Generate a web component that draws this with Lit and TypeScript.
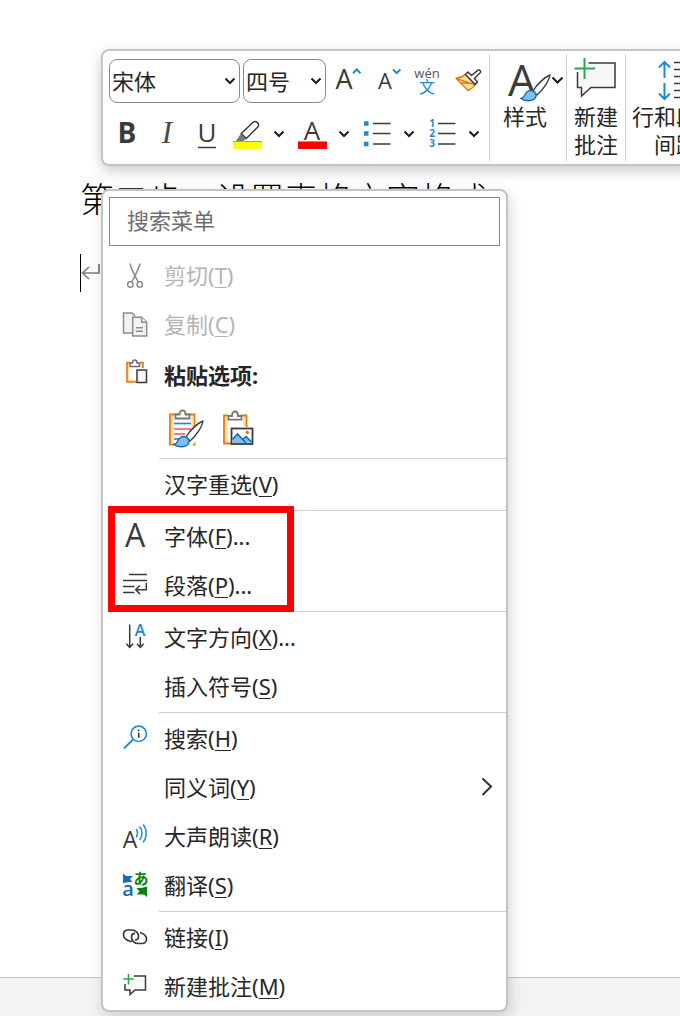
import { LitElement, html, svg, css, nothing, TemplateResult } from "lit";
import { customElement } from "lit/decorators.js";

const orange = "#e07b10";
const blue = "#1e8bcd";
const ink = "#3b3b3b";

const icon = (size: number, body: TemplateResult) =>
  html`<svg width=${size} height=${size} viewBox="0 0 ${size} ${size}" fill="none" aria-hidden="true">${body}</svg>`;

const letter = (t: string, x: number, y: number, size: number, color = ink, weight = 400) =>
  svg`<text x=${x} y=${y} font-size=${size} font-weight=${weight} fill=${color} text-anchor="middle" font-family="Open Sans, Noto Sans, Noto Sans CJK SC, sans-serif">${t}</text>`;

const chevron = html`<svg width="12" height="8" viewBox="0 0 12 8" fill="none" aria-hidden="true">
  <path d="M1.5 1.5L6 6l4.5-4.5" stroke="#1a1a1a" stroke-width="2" />
</svg>`;

const brush = (dx: number, dy: number) => svg`<g transform="translate(${dx} ${dy})">
  <path d="M31 1C26 3 18 10 14 17l4 4C24 16 30 7 31 1z" fill="#fff" stroke=${ink} stroke-width="1.4" stroke-linejoin="round" />
  <path d="M2 24.500C6 24 5 20 8.500 17.500c3-2 7.500-.5 8.500 3 .8 4-3.500 6.500-8 6.300C5.500 26.700 3.500 25.800 2 24.500z" fill="#83beec" stroke="#0f6cbd" stroke-width="1.4" />
</g>`;

const icons: Record<string, TemplateResult> = {
  grow: icon(40, svg`${letter("A", 17, 28, 27)}<path d="M26 12.200L29.800 8.500l3.700 3.700" stroke=${blue} stroke-width="2" />`),
  shrink: icon(40, svg`${letter("A", 18, 28, 22)}<path d="M26 8.500l3.700 3.700 3.700-3.700" stroke=${blue} stroke-width="2" />`),
  pinyin: icon(40, svg`${letter("wén", 20, 17, 13, "#555")}${letter("文", 20, 32, 16, blue)}`),
  painter: icon(40, svg`
    <path d="M9 17.300C13 17 16 15.500 18.500 13.300L28.300 23.500C27 26 24 28 21 29.500z" fill="#fbe0a6" stroke=${orange} stroke-width="1.4" stroke-linejoin="round" />
    <path d="M9 17.300L27 23.500M14 22l8 .2" stroke=${orange} stroke-width="1.4" />
    <path d="M21 11l3.500 3.500L31 9.200c1.800-1 3.500 1.200 2.200 2.600L27.300 17.500l3.200 3.300-2.300 2.600L18.500 13.500z" fill="#fff" stroke=${ink} stroke-width="1.5" stroke-linejoin="round" />`),
  bold: icon(40, letter("B", 20, 29, 28, ink, 700)),
  italic: icon(40, svg`<text x="20" y="29" font-size="31" font-style="italic" fill="#4a4a4a" text-anchor="middle" font-family="Liberation Serif, serif">I</text>`),
  underline: icon(40, svg`${letter("U", 20, 28, 26)}<path d="M11 33.500H29" stroke=${ink} stroke-width="1.5" />`),
  highlight: icon(40, svg`
    <rect x="6" y="28" width="29" height="7" fill="#ffff00" /><path d="M6 27.500H35" stroke="#999" />
    <path d="M9 27l4.500-7 5.500 5-3 2z" fill="#777" />
    <path d="M14.300 19.500L26 8.300c3-2 7 1.200 5 4.500L19.300 24.500z" fill="#fff" stroke=${ink} stroke-width="1.5" />`),
  color: icon(40, svg`<rect x="6" y="28" width="29" height="7" fill="#f00" /><path d="M6 27.500H35" stroke="#999" />${letter("A", 20, 26, 26)}`),
  bullets: icon(40, svg`
    <path d="M7 9.500h4.500M7 19.500h4.500M7 30h4.500" stroke=${blue} stroke-width="4.500" />
    <path d="M16 9.500h17.500M16 19.500h17.500M16 30h17.500" stroke=${ink} stroke-width="1.5" />`),
  numbers: icon(40, svg`
    ${letter("1", 10, 13, 10, blue, 700)}${letter("2", 10, 23, 10, blue, 700)}${letter("3", 10, 33, 10, blue, 700)}
    <path d="M16 9.500h17.500M16 19.500h17.500M16 30h17.500" stroke=${ink} stroke-width="1.5" />`),
  cut: icon(32, svg`<g stroke="#8c8c8c" stroke-width="1.5">
    <path d="M11 4.500c1 5 5 12.500 8.300 18.500M21 4.500c-1 5-5 12.500-8.300 18.500" />
    <circle cx="11.300" cy="25.500" r="2.700" /><circle cx="20.700" cy="25.500" r="2.700" /></g>`),
  copy: icon(32, svg`<g stroke="#8c8c8c" stroke-width="1.5" fill="#f2f2f2">
    <path d="M13.500 25H4.500V5H13l3 3" />
    <path d="M13.700 9.300H22.700l5 5V28H13.700z" /><path d="M22.700 9.300v5h5M17 19.800h7M17 23.300h7" /></g>`),
  paste: icon(32, svg`
    <path d="M10.500 4.500H9V22H17M21 4.500h2V9" stroke="#f8d9a8" stroke-width="2" />
    <path d="M10.500 3.500H8V23H17M21 3.500h3V9" stroke=${orange} stroke-width="1.6" />
    <path d="M11 7.500V4h2.500c0-4 4.500-4 4.500 0h2.500v3.500z" fill="#fff" stroke="#6b6b6b" stroke-width="1.5" />
    <rect x="18" y="11" width="9.500" height="12.500" fill="#f7f7f7" stroke=${ink} stroke-width="1.5" />`),
  keep: icon(40, svg`
    <path d="M4 5.500H28.500V35.500H4z" fill="#fafafa" stroke=${orange} stroke-width="1.8" />
    <path d="M6.200 7V34M26.500 7V34" stroke="#f8d9a8" stroke-width="2.400" />
    <path d="M9.500 9.500V5.500h4c0-5.500 6-5.500 6 0h4v4z" fill="#fff" stroke="#777" stroke-width="1.8" />
    <path d="M8 14.500H25" stroke=${blue} stroke-width="1.6" />
    <path d="M8 20H25M8 25H19" stroke="#e8555a" stroke-width="1.6" />
    <path d="M8 30H14" stroke=${blue} stroke-width="1.6" />
    <path d="M37 12L20 26 17 38 26 37 38 22z" fill="#fff" />
    ${brush(6, 11)}`),
  picture: icon(40, svg`
    <path d="M6.500 8V33M24.500 8v9" stroke="#f8d9a8" stroke-width="2.400" />
    <path d="M8 6.500H4V34.500H11M21 6.500h5.500V18" stroke=${orange} stroke-width="1.8" />
    <path d="M8.500 10.700V7h3.500c0-6 6-6 6 0h3.500v3.700z" fill="#fff" stroke="#777" stroke-width="1.8" />
    <rect x="11.500" y="19.500" width="21" height="15.500" fill="#fff" stroke=${ink} stroke-width="1.8" />
    <path d="M12.500 34V30.500L17.500 25l5 5.500 3.500-2.500 5.500 5v1z" fill="#83beec" />
    <path d="M12.500 30.500L17.500 25l8.500 9M22.500 30.500l3.500-3 5.500 5.500" stroke="#0f6cbd" stroke-width="1.6" />
    <circle cx="27.300" cy="23.500" r="1.700" fill=${orange} />`),
  font: icon(32, letter("A", 16, 27, 32)),
  paragraph: icon(32, svg`<path d="M10 5.500H28M4 11.500H28M4 17.500H15.500M4 23.500H15.500M27.300 14v6.800H17M21 16.500l-4.300 4.300 4.300 4.300" stroke=${ink} stroke-width="1.5" />`),
  direction: icon(32, svg`<path d="M10.700 3.500V26M7.300 22.700l3.400 3.600 3.400-3.600M21.300 16V26M17.900 22.700l3.400 3.600 3.400-3.600" stroke=${ink} stroke-width="1.5" />${letter("A", 21, 15, 16, blue, 600)}`),
  search: icon(32, svg`<circle cx="19.700" cy="11.800" r="7.700" stroke=${blue} stroke-width="1.6" /><path d="M14 17.500L5 26.500" stroke=${blue} stroke-width="1.8" /><path d="M19.700 10.700v5M19.700 7.500v1.700" stroke=${ink} stroke-width="1.6" />`),
  aloud: icon(32, svg`${letter("A", 11, 28, 23)}<path d="M17 9c2 2.200 2 6 0 8.200M20.500 6.500c3.300 3.500 3.300 10 0 13.500M24 4.500c4.200 4.800 4.200 13 0 17.800" stroke=${blue} stroke-width="1.5" />`),
  translate: icon(32, svg`${letter("a", 9, 27, 20, "#1569bf", 600)}
    <path d="M4 4.500l3 2.500h7l-3 3 2.500 3H10L4 14z" fill="#1569bf" />
    ${letter("あ", 22, 15, 15, "#107c10", 700)}
    <path d="M28 28l-3-2.500h-7.500l3-3-3-3.500h5L28 17.500z" fill="#107c10" />`),
  link: icon(32, svg`<g stroke=${ink} stroke-width="1.7">
    <path d="M13 20.500H11.500C8 19.500 4.500 17 4.500 13.500 4.500 10.800 6.500 9 9.500 9h3.500c3.500 0 6.500 3 6.500 6.300 0 2.400-1.300 3.700-3.500 3.700" />
    <path d="M21 11.500c3.500 1 6.500 3.500 6.500 6.700 0 2.600-2 4.300-4.500 4.300h-4c-3.500 0-6.500-3-6.500-6.500 0-2.300 1.200-3.600 3.500-3.600" /></g>`),
  comment: icon(32, svg`<path d="M15 6H26.500V20H16l-5 4.500V20H6V14" fill="#f7f7f7" stroke=${ink} stroke-width="1.5" /><path d="M9.500 4v10.500M4.300 9h10.500" stroke="#fff" stroke-width="3" /><path d="M9.500 4v10.500M4.300 9h10.500" stroke="#2ea44f" stroke-width="1.6" />`),
};

interface Item { label: string; key?: string; tail?: string; icon?: string; disabled?: boolean; sub?: boolean }

const clipboardItems: Item[] = [
  { label: "剪切", key: "T", icon: "cut", disabled: true },
  { label: "复制", key: "C", icon: "copy", disabled: true },
];

const groups: Item[][] = [
  [{ label: "汉字重选", key: "V" }],
  [{ label: "字体", key: "F", tail: "...", icon: "font" }, { label: "段落", key: "P", tail: "...", icon: "paragraph" }],
  [{ label: "文字方向", key: "X", tail: "...", icon: "direction" }, { label: "插入符号", key: "S" }],
  [
    { label: "搜索", key: "H", icon: "search" },
    { label: "同义词", key: "Y", sub: true },
    { label: "大声朗读", key: "R", icon: "aloud" },
    { label: "翻译", key: "S", icon: "translate" },
  ],
  [{ label: "链接", key: "I", icon: "link" }, { label: "新建批注", key: "M", icon: "comment" }],
];

const shared = css`
  * { box-sizing: border-box; }
  button, select, input {
    font: inherit; color: inherit; margin: 0; padding: 0; border: 0; background: none; border-radius: 0;
  }
  svg { display: block; flex: none; overflow: visible; }
`;

@customElement("mini-toolbar")
export class MiniToolbar extends LitElement {
  static styles = [shared, css`
    :host {
      display: flex; width: max-content; padding: 3px 0; box-sizing: border-box;
      background: #fff; border: 2px solid #c4c4c4; border-radius: 8px;
      box-shadow: 0 5px 14px rgba(0, 0, 0, 0.2); color: #262626; font-size: 22px;
    }
    .format { display: grid; gap: 11px; padding: 5px 2px 7px 6px; align-content: start; }
    .row { display: flex; align-items: center; }
    .pick { display: grid; align-items: center; margin-right: 3px; }
    .pick.last { margin-right: 1px; }
    .pick > * { grid-area: 1 / 1; }
    .pick svg { justify-self: end; margin-right: 4px; pointer-events: none; }
    select {
      appearance: none; width: 100%; height: 44px; padding: 0 20px 1px 2px;
      border: 1px solid #8a8a8a; border-radius: 8px; background: #fff;
    }
    .font { width: 131px; }
    .size { width: 83px; }
    .tool { display: grid; place-items: center; width: 40px; height: 40px; }
    .styles { display: flex; margin-left: -2px; }
    .split { display: flex; align-items: center; width: 65px; }
    .arrow { display: grid; place-items: center; width: 24px; height: 40px; }
    .big {
      display: flex; flex-direction: column; align-items: center;
      border-left: 1px solid #d0d0d0; line-height: 28px;
    }
    .big svg { margin-bottom: -1px; }
    .label { display: block; text-align: center; }
    .style { width: 77px; align-items: start; }
    .style .label { padding-left: 13px; }
    .note { width: 59px; }
    .space { padding: 0 6px; }
  `];

  private tool(name: string, label: string) {
    return html`<button class="tool" aria-label=${label}>${icons[name]}</button>`;
  }

  private split(name: string, label: string) {
    return html`<div class="split">${this.tool(name, label)}
      <button class="arrow" aria-label="${label}选项">${chevron}</button></div>`;
  }

  render() {
    return html`
      <div class="format">
        <div class="row">
          <div class="pick font"><select aria-label="字体"><option>宋体</option></select>${chevron}</div>
          <div class="pick last size"><select aria-label="字号"><option>四号</option></select>${chevron}</div>
          ${this.tool("grow", "增大字号")}${this.tool("shrink", "减小字号")}
          ${this.tool("pinyin", "拼音指南")}${this.tool("painter", "格式刷")}
        </div>
        <div class="row styles">
          ${this.tool("bold", "加粗")}${this.tool("italic", "倾斜")}${this.tool("underline", "下划线")}
          ${this.split("highlight", "突出显示")}${this.split("color", "字体颜色")}
          ${this.split("bullets", "项目符号")}${this.split("numbers", "编号")}
        </div>
      </div>
      <button class="big style">
        <svg width="76" height="49" viewBox="0 0 76 49" fill="none" aria-hidden="true">
          ${letter("A", 32, 42, 44)}${brush(29, 20)}
          <path d="M62.500 23.500L67.500 28.500l5-5" stroke="#1a1a1a" stroke-width="2" />
        </svg>
        <span class="label">样式</span>
      </button>
      <button class="big note">
        <svg width="58" height="49" viewBox="0 0 58 49" fill="none" aria-hidden="true">
          <path d="M21.500 9H48v24.500H24L14.500 42v-8.500h-4V18" fill="#f7f7f7" stroke=${ink} stroke-width="1.5" />
          <path d="M17.500 4v21M7.500 14.500H28" stroke="#fff" stroke-width="4" />
          <path d="M17.500 4v21M7.500 14.500H28" stroke="#2ea44f" stroke-width="2" />
        </svg>
        <span class="label">新建<br />批注</span>
      </button>
      <button class="big space">
        <svg width="88" height="49" viewBox="0 0 88 49" fill="none" aria-hidden="true">
          <path d="M32.500 8v16M27 13.500L32.500 8l5.500 5.500M32.500 29v16M27 39.500l5.500 5.500 5.500-5.500" stroke=${blue} stroke-width="2" />
          <path d="M42 8.500h20M42 15.500h20M42 22.500h20M42 29.500h20M42 36.500h20M42 43.500h20" stroke=${ink} stroke-width="1.5" />
        </svg>
        <span class="label">行和段落<br />间距</span>
      </button>`;
  }
}

@customElement("context-menu")
export class ContextMenu extends LitElement {
  static styles = [shared, css`
    :host {
      display: block; box-sizing: border-box; background: #fff; color: #262626; font-size: 22px;
      border: 2px solid #c4c4c4; border-radius: 8px; box-shadow: 2px 5px 14px rgba(0, 0, 0, 0.16);
    }
    .search { padding: 6px 6px 4px; }
    input { display: block; width: 100%; height: 49px; padding: 0 17px 4px; border: 1px solid #8a8a8a; outline: 0; }
    input::placeholder { color: #6e6e6e; opacity: 1; }
    .item { display: flex; align-items: center; width: 100%; height: 49px; padding: 0 13px 0 16px; text-align: left; }
    .item:disabled { color: #b4b4b4; }
    .icon { flex: none; width: 32px; margin-right: 13px; }
    .text { flex: 1; line-height: 30px; }
    .head { height: 54px; font-weight: 700; }
    .options { display: flex; height: 54px; margin-left: 56px; }
    .option { display: grid; place-items: center; width: 54px; }
    hr { height: 1px; margin: 2px 0 0 56px; border: 0; background: #d0d0d0; }
    .underline { text-decoration: underline; text-decoration-thickness: 1px; text-underline-offset: 3px; }
  `];

  private item(i: Item) {
    return html`<button class="item" role="menuitem" ?disabled=${!!i.disabled}>
      <span class="icon">${i.icon ? icons[i.icon] : nothing}</span>
      <span class="text">${i.label}(<span class="underline">${i.key}</span>)${i.tail ?? ""}</span>
      ${i.sub ? html`<svg width="12" height="20" viewBox="0 0 12 20" fill="none" aria-hidden="true"><path d="M1.500 1.500L10 9.500l-8.500 8.500" stroke="#333" stroke-width="2" /></svg>` : nothing}
    </button>`;
  }

  render() {
    return html`
      <div class="search"><input type="search" aria-label="搜索菜单" placeholder="搜索菜单" /></div>
      ${clipboardItems.map((i) => this.item(i))}
      <div class="item head"><span class="icon">${icons.paste}</span><span class="text">粘贴选项:</span></div>
      <div class="options">
        <button class="option" aria-label="保留源格式">${icons.keep}</button>
        <button class="option" aria-label="图片">${icons.picture}</button>
      </div>
      ${groups.map((g) => html`<hr />${g.map((i) => this.item(i))}`)}`;
  }
}

@customElement("app-root")
export class AppRoot extends LitElement {
  static styles = css`
    :host {
      display: block; position: relative; overflow: hidden; min-height: 100vh; background: #fff;
      font-family: "Noto Sans", "Noto Sans CJK SC", sans-serif;
    }
    .page { display: flex; flex-direction: column; min-height: 100vh; }
    .doc { flex: 1; padding: 177px 0 0 80px; }
    .title {
      margin: 0; font-family: "Liberation Serif", "Noto Sans CJK SC", serif; font-weight: 300;
      font-size: 34px; line-height: 48px; color: #000; white-space: nowrap;
    }
    .line { display: flex; align-items: center; height: 38px; margin-top: 29px; border-left: 1px solid #000; }
    .status { height: 38px; background: #f3f3f3; border-top: 1px solid #c6c6c6; }
    .toolbar { position: absolute; left: 101px; top: 49px; }
    .menu { position: absolute; left: 101px; top: 189px; width: 407px; }
    .mark { position: absolute; left: 108px; top: 506px; width: 186px; height: 106px; box-sizing: border-box; border: 7px solid #f00; }
  `;

  render() {
    return html`
      <div class="page">
        <main class="doc">
          <p class="title">第二步：设置表格文字格式</p>
          <div class="line">
            <svg width="20" height="20" viewBox="0 0 20 20" fill="none" aria-hidden="true">
              <path d="M18 1v9H2M8 4l-6.500 6L8 16" stroke="#7d7d7d" stroke-width="1.7" />
            </svg>
          </div>
        </main>
        <footer class="status"></footer>
      </div>
      <mini-toolbar class="toolbar"></mini-toolbar>
      <context-menu class="menu"></context-menu>
      <div class="mark"></div>`;
  }
}
